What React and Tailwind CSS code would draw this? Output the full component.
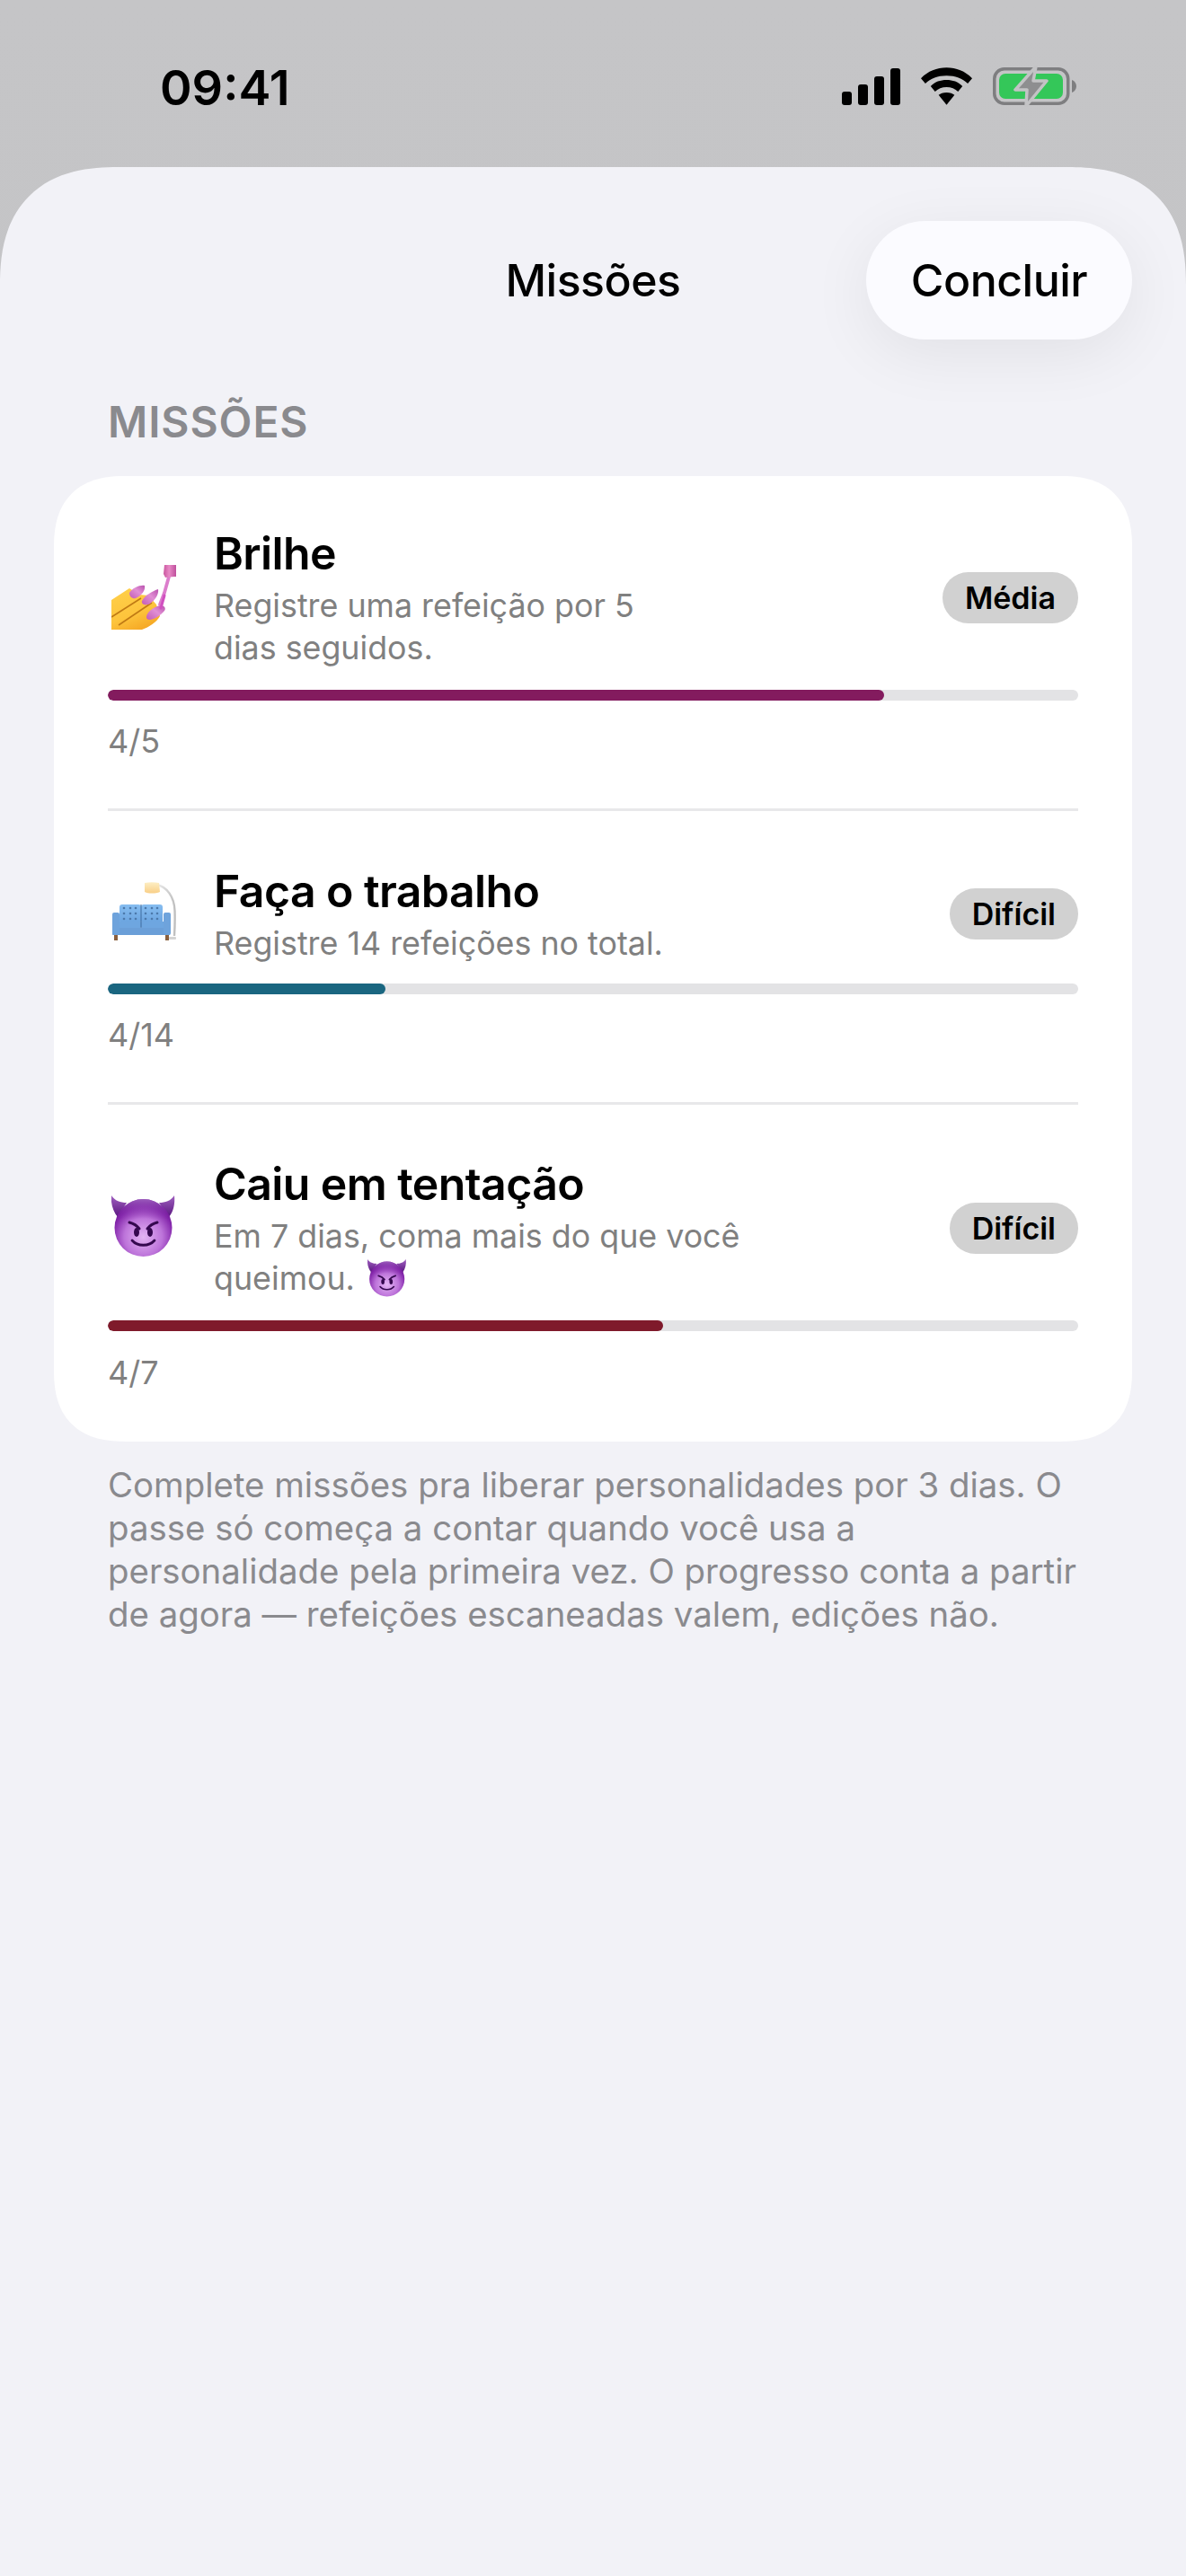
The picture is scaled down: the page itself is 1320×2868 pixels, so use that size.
import React from "react";

function Signal() {
  return (
    <svg width="65" height="41" viewBox="0 0 65 41" className="block">
      <rect x="0" y="26" width="11" height="15" rx="3" fill="#000" />
      <rect x="18" y="18" width="11" height="23" rx="3" fill="#000" />
      <rect x="36" y="9" width="11" height="32" rx="3" fill="#000" />
      <rect x="54" y="0" width="11" height="41" rx="3" fill="#000" />
    </svg>
  );
}
function Wifi() {
  return (
    <svg width="57" height="42" viewBox="0 0 58 42" className="block">
      <path d="M29 0C18 0 8 4 0 12l5 6c6-6 14-9 24-9s18 3 24 9l5-6C50 4 40 0 29 0Z" fill="#000" />
      <path d="M29 14c-7 0-13 2-18 7l5 6c3-3 8-5 13-5s10 2 13 5l5-6c-5-5-11-7-18-7Z" fill="#000" />
      <path d="M29 28c-4 0-7 1-9 3l9 11 9-11c-2-2-5-3-9-3Z" fill="#000" />
    </svg>
  );
}
function Battery() {
  return (
    <svg width="94" height="46" viewBox="0 0 94 46" className="block">
      <rect x="1.75" y="3.75" width="82" height="38.5" rx="11" fill="none" stroke="#7e7e80" strokeWidth="3.5" />
      <rect x="7" y="9" width="71" height="28" rx="7" fill="#34c759" />
      <path d="M88 16c3 1 5 4 5 7s-2 6-5 7Z" fill="#7e7e80" />
      <path d="M48 1 25 27h13l-1 18 23-28H45Z" fill="#8e8e90" stroke="#c3c3c5" strokeWidth="3.5" strokeLinejoin="round" />
    </svg>
  );
}

function NailEmoji() {
  return (
    <svg width="72" height="72" viewBox="0 0 72 72" className="block">
      <defs>
        <linearGradient id="nailSkin" x1="0.2" y1="0" x2="0.7" y2="1">
          <stop offset="0" stopColor="#ffcf4a" />
          <stop offset="0.6" stopColor="#fdc43c" />
          <stop offset="1" stopColor="#f5a623" />
        </linearGradient>
        <linearGradient id="nailPaint" x1="0" y1="1" x2="1" y2="0">
          <stop offset="0" stopColor="#c25cb4" />
          <stop offset="0.55" stopColor="#e18fd4" />
          <stop offset="1" stopColor="#b952ae" />
        </linearGradient>
        <linearGradient id="nailCap" x1="0" y1="0" x2="1" y2="0">
          <stop offset="0" stopColor="#c9559e" />
          <stop offset="0.45" stopColor="#e88ac6" />
          <stop offset="1" stopColor="#bf4f9c" />
        </linearGradient>
      </defs>
      <path d="M0 39 20 26 31 33 41 34 50 44 54 57C50 64 42 69 34 72H0Z" fill="url(#nailSkin)" />
      <path d="M0 58 33 37M8 67 45 42" stroke="#c07a14" strokeWidth="1.6" fill="none" />
      <path d="M20 31C24 25 32 22 37 23 38 28 34 34 27 37 24 38 20 36 20 31Z" fill="url(#nailPaint)" />
      <path d="M34 40C38 33 46 29 52 27 53 32 49 39 43 43 38 46 33 44 34 40Z" fill="url(#nailPaint)" />
      <path d="M39 58C39 53 46 47 54 45 59 45 61 48 59 51 55 56 49 60 43 61 40 61 39 60 39 58Z" fill="url(#nailPaint)" />
      <path d="M64 13 59 31 54 44" stroke="#dc7dcc" strokeWidth="3.8" fill="none" strokeLinecap="round" />
      <path d="M55 48 59 34" stroke="#d14fc0" strokeWidth="3" fill="none" strokeLinecap="round" />
      <path d="M59 0h13v13h-2l-10 1-2-4Z" fill="url(#nailCap)" />
    </svg>
  );
}

function CouchEmoji() {
  return (
    <svg width="72" height="72" viewBox="0 0 72 72" className="block">
      <defs>
        <linearGradient id="couchShade" x1="0" y1="0" x2="0" y2="1">
          <stop offset="0" stopColor="#fdeec4" />
          <stop offset="1" stopColor="#f9cf87" />
        </linearGradient>
        <linearGradient id="couchBack" x1="0" y1="0" x2="0" y2="1">
          <stop offset="0" stopColor="#86bdf0" />
          <stop offset="1" stopColor="#6aa3df" />
        </linearGradient>
        <linearGradient id="couchPole" x1="0" y1="0" x2="1" y2="0">
          <stop offset="0" stopColor="#eeeeee" />
          <stop offset="1" stopColor="#bfbfbf" />
        </linearGradient>
      </defs>
      <path d="M50 3C62 5 70 17 70.5 32c.4 11 0 20-.5 28" fill="none" stroke="url(#couchPole)" strokeWidth="2.4" />
      <rect x="64" y="61" width="8" height="3" rx="1" fill="#d4d4d4" />
      <path d="M37 1c5-1 11-1 16 0l1 10c-5 2-13 2-17 0Z" fill="url(#couchShade)" />
      <rect x="9" y="25" width="24" height="21" rx="3" fill="url(#couchBack)" />
      <rect x="33" y="25" width="24" height="21" rx="3" fill="url(#couchBack)" />
      {[14, 21, 27, 38, 45, 51].flatMap((x) =>
        [29, 35, 41].map((y) => <circle key={`${x}-${y}`} cx={x} cy={y} r="1.3" fill="#4c79ab" />)
      )}
      <rect x="7" y="44" width="26" height="7" rx="1" fill="#6ea6e0" />
      <rect x="33" y="44" width="26" height="7" rx="1" fill="#6ea6e0" />
      <rect x="32.5" y="25" width="1" height="26" fill="#3d6a9e" />
      <rect x="7" y="51" width="52" height="1" fill="#44739f" />
      <rect x="1" y="51" width="64" height="8" rx="1" fill="#6b9fd8" />
      <rect x="1" y="34" width="8" height="25" rx="2" fill="#6ea3dc" />
      <rect x="58" y="34" width="8" height="25" rx="2" fill="#6ea3dc" />
      <rect x="3" y="59" width="4" height="6" fill="#8a5f3d" />
      <rect x="60" y="59" width="4" height="6" fill="#8a5f3d" />
    </svg>
  );
}

function ImpEmoji({ id, size = 72 }) {
  return (
    <svg width={size} height={size} viewBox="0 0 72 72" className="block">
      <defs>
        <radialGradient id={id} cx="0.5" cy="0.66" r="0.6">
          <stop offset="0" stopColor="#e4b4f4" />
          <stop offset="0.55" stopColor="#bd74da" />
          <stop offset="0.88" stopColor="#8528ac" />
          <stop offset="1" stopColor="#74189b" />
        </radialGradient>
        <linearGradient id={`${id}t`} x1="0" y1="0" x2="0" y2="1">
          <stop offset="0" stopColor="#a872c8" stopOpacity="0.75" />
          <stop offset="0.35" stopColor="#7d1fa4" stopOpacity="0" />
        </linearGradient>
        <linearGradient id={`${id}h`} x1="0" y1="0" x2="0" y2="1">
          <stop offset="0" stopColor="#a060c0" />
          <stop offset="1" stopColor="#5a1680" />
        </linearGradient>
      </defs>
      <path d="M0 0C4 6 10 8 17 8L7 24C2 18-1 9 0 0Z" fill={`url(#${id}h)`} />
      <path d="M70 0C66 6 60 8 53 8L64 24C69 18 71 9 70 0Z" fill={`url(#${id}h)`} />
      <circle cx="35.5" cy="36" r="32" fill={`url(#${id})`} />
      <circle cx="35.5" cy="36" r="32" fill={`url(#${id}t)`} />
      <path d="M20 30C24 31 28 33 31 37" stroke="#35084f" strokeWidth="3" fill="none" strokeLinecap="round" />
      <path d="M51 30C47 31 43 33 40 37" stroke="#35084f" strokeWidth="3" fill="none" strokeLinecap="round" />
      <ellipse cx="28" cy="41" rx="3" ry="5" fill="#35084f" />
      <ellipse cx="43" cy="41" rx="3" ry="5" fill="#35084f" />
      <path d="M23 50C29 57 42 57 48 50" fill="none" stroke="#35084f" strokeWidth="2.8" strokeLinecap="round" />
    </svg>
  );
}

function Mission({ icon, title, children, level, pct, color, count, rowClass, bar, countClass }) {
  return (
    <div className={rowClass}>
      <div className="flex items-center">
        <div className="w-[118px] shrink-0 pl-[4px]">{icon}</div>
        <div className="flex-1 min-w-0">
          <div className="text-[50px] leading-[62px] font-semibold text-black tracking-[-0.6px]">{title}</div>
          <div className="text-[35.8px] leading-[47px] text-[#808080] mt-[4px]">{children}</div>
        </div>
        <div className="shrink-0 h-[57px] rounded-full bg-[#d1d1d1] flex items-center px-[25px] text-[34px] font-semibold text-black">{level}</div>
      </div>
      <div className={`${bar} h-[12px] rounded-full bg-[#e3e3e5] overflow-hidden`}>
        <div className="h-full rounded-full" style={{ width: `${pct}%`, backgroundColor: color }} />
      </div>
      <div className={`${countClass} text-[36px] leading-[44px] text-[#808080]`}>{count}</div>
    </div>
  );
}

export default function App() {
  return (
    <div className="w-[1320px] h-[2868px] overflow-hidden flex flex-col bg-gradient-to-b from-[#c5c5c7] to-[#bfc0c2] [font-family:Inter,'Liberation_Sans',sans-serif]">
      <div className="h-[186px] shrink-0 pl-[178px] pr-[121px] pt-[66px] flex justify-between items-start">
        <div className="text-[54px] leading-[64px] font-semibold text-black">09:41</div>
        <div className="flex items-center gap-[23px] pt-[7px]">
          <Signal />
          <Wifi />
          <Battery />
        </div>
      </div>
      <div className="flex-1 bg-[#f2f2f7] rounded-t-[132px] [corner-shape:superellipse(1.3)] px-[60px]">
        <div className="relative h-[192px] pt-[60px] flex justify-center">
          <div className="text-[50px] leading-[132px] font-medium tracking-[-0.5px] text-black">Missões</div>
          <div className="absolute right-0 top-[60px] h-[132px] w-[296px] rounded-full bg-[#fbfbff] shadow-[0_16px_70px_rgba(0,0,0,0.07)] flex items-center justify-center text-[50px] font-medium tracking-[-0.5px] text-black">Concluir</div>
        </div>
        <div className="pl-[60px] mt-[64px] text-[48px] leading-[56px] font-semibold tracking-[0.9px] text-[#8a8a8e]">MISSÕES</div>
        <div className="mt-[32px] bg-white rounded-[80px] [corner-shape:superellipse(1.3)] px-[60px]">
          <Mission
            rowClass="pt-[55px] pb-[53px] border-b-[3px] border-[#e8e8ea]"
            bar="mt-[23px]"
            countClass="mt-[23px]"
            icon={<NailEmoji />}
            title="Brilhe"
            level="Média"
            pct={80}
            color="#831b5e"
            count="4/5"
          >
            Registre uma refeição por 5<br />dias seguidos.
          </Mission>
          <Mission
            rowClass="pt-[58px] pb-[53px] border-b-[3px] border-[#e8e8ea]"
            bar="mt-[21px]"
            countClass="mt-[23px]"
            icon={<CouchEmoji />}
            title="Faça o trabalho"
            level="Difícil"
            pct={28.6}
            color="#1a6680"
            count="4/14"
          >
            Registre 14 refeições no total.
          </Mission>
          <Mission
            rowClass="pt-[57px] pb-[55px]"
            bar="mt-[23px]"
            countClass="mt-[24px]"
            icon={<ImpEmoji id="impA" />}
            title="Caiu em tentação"
            level="Difícil"
            pct={57.2}
            color="#7f1a2b"
            count="4/7"
          >
            Em 7 dias, coma mais do que você
            <br />
            <span className="inline-flex items-center h-[47px] gap-[14px]">queimou. <ImpEmoji id="impB" size={44} /></span>
          </Mission>
        </div>
        <div className="mx-[60px] mt-[24px] text-[38.4px] leading-[48px] text-[#8a8a8e]">
          Complete missões pra liberar personalidades por 3 dias. O passe só começa a contar quando você usa a personalidade pela primeira vez. O progresso conta a partir de agora — refeições escaneadas valem, edições não.
        </div>
      </div>
    </div>
  );
}
